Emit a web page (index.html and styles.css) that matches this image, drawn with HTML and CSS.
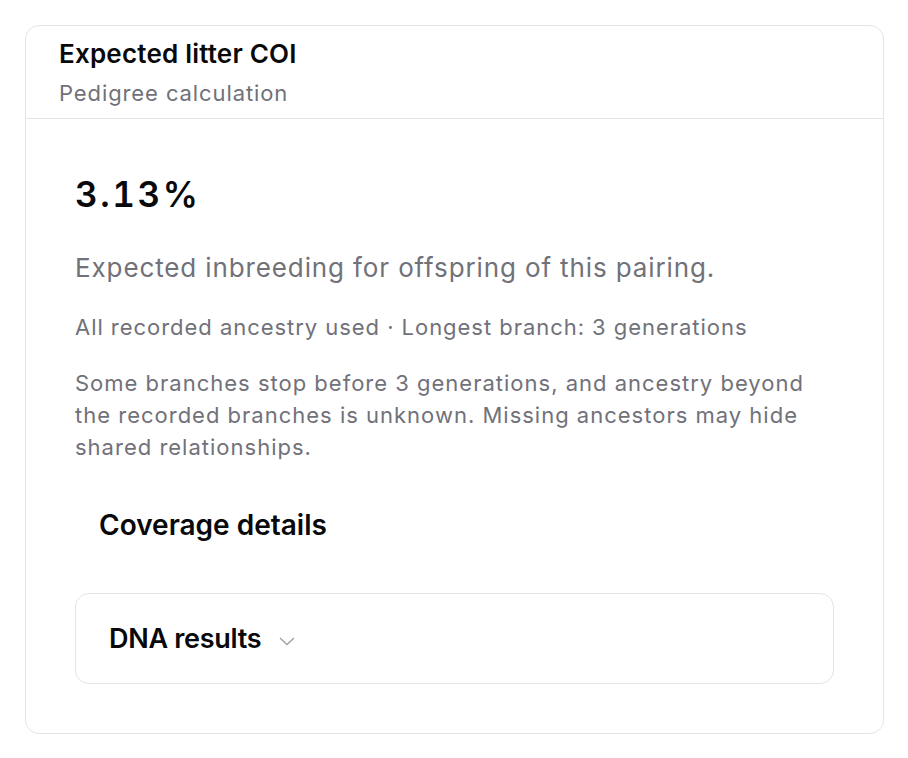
FILE: index.html
```html
<!DOCTYPE html>
<html>
<head>
<meta charset="utf-8">
<link rel="stylesheet" href="styles.css">
</head>
<body>
<div class="card">
  <div class="card-header">
    <div class="title">Expected litter COI</div>
    <div class="subtitle">Pedigree calculation</div>
  </div>
  <div class="card-body">
    <div class="value">3.13%</div>
    <p class="lead">Expected inbreeding for offspring of this pairing.</p>
    <p class="meta">All recorded ancestry used · Longest branch: 3 generations</p>
    <p class="note">Some branches stop before 3 generations, and ancestry beyond the recorded branches is unknown. Missing ancestors may hide shared relationships.</p>
    <div class="coverage">Coverage details</div>
    <div class="dna">
      <span class="dna-label">DNA results</span>
      <svg class="chev" width="16" height="9" viewBox="0 0 16 9" fill="none" stroke="#a1a1aa" stroke-width="1.5" stroke-linecap="round" stroke-linejoin="round"><path d="M1.5 1.5l6.5 6 6.5-6"/></svg>
    </div>
  </div>
</div>
</body>
</html>
```
FILE: styles.css
```css
* { box-sizing: border-box; }
body {
  margin: 0;
  background: #fff;
  font-family: Inter, "Noto Sans", sans-serif;
  color: #09090b;
}
.card {
  margin: 25px 0 0 25px;
  width: 859px;
  height: 709px;
  border: 1.5px solid #e4e4e7;
  border-radius: 14px;
}
.card-header {
  padding: 12px 33px 8.5px;
  border-bottom: 1.5px solid #e4e4e7;
}
.title {
  font-size: 26px;
  font-weight: 600;
  line-height: 32px;
  letter-spacing: 0.2px;
}
.subtitle {
  margin-top: 7px;
  font-size: 22px;
  line-height: 32px;
  letter-spacing: 0.9px;
  color: #71717a;
}
.card-body {
  padding: 53px 49px 0;
}
.value {
  font-size: 35px;
  font-weight: 600;
  line-height: 44px;
  font-feature-settings: "tnum" 1;
  letter-spacing: 2.6px;
}
.lead {
  margin: 36px 0 0;
  font-size: 26px;
  line-height: 32px;
  letter-spacing: 0.88px;
  color: #71717a;
}
.meta {
  margin: 27px 0 0;
  font-size: 22px;
  line-height: 32px;
  letter-spacing: 0.96px;
  color: #71717a;
}
.note {
  margin: 24px 0 0;
  font-size: 22px;
  line-height: 32px;
  letter-spacing: 1px;
  color: #71717a;
}
.coverage {
  margin: 44px 0 0 24px;
  font-size: 28px;
  font-weight: 600;
  line-height: 36px;
}
.dna {
  margin-top: 50px;
  height: 91px;
  border: 1.5px solid #e4e4e7;
  border-radius: 14px;
  display: flex;
  align-items: center;
  padding-left: 33px;
  gap: 18px;
}
.dna-label {
  font-size: 27px;
  font-weight: 600;
  letter-spacing: -0.3px;
}
.chev { margin-top: 6px; }
```
